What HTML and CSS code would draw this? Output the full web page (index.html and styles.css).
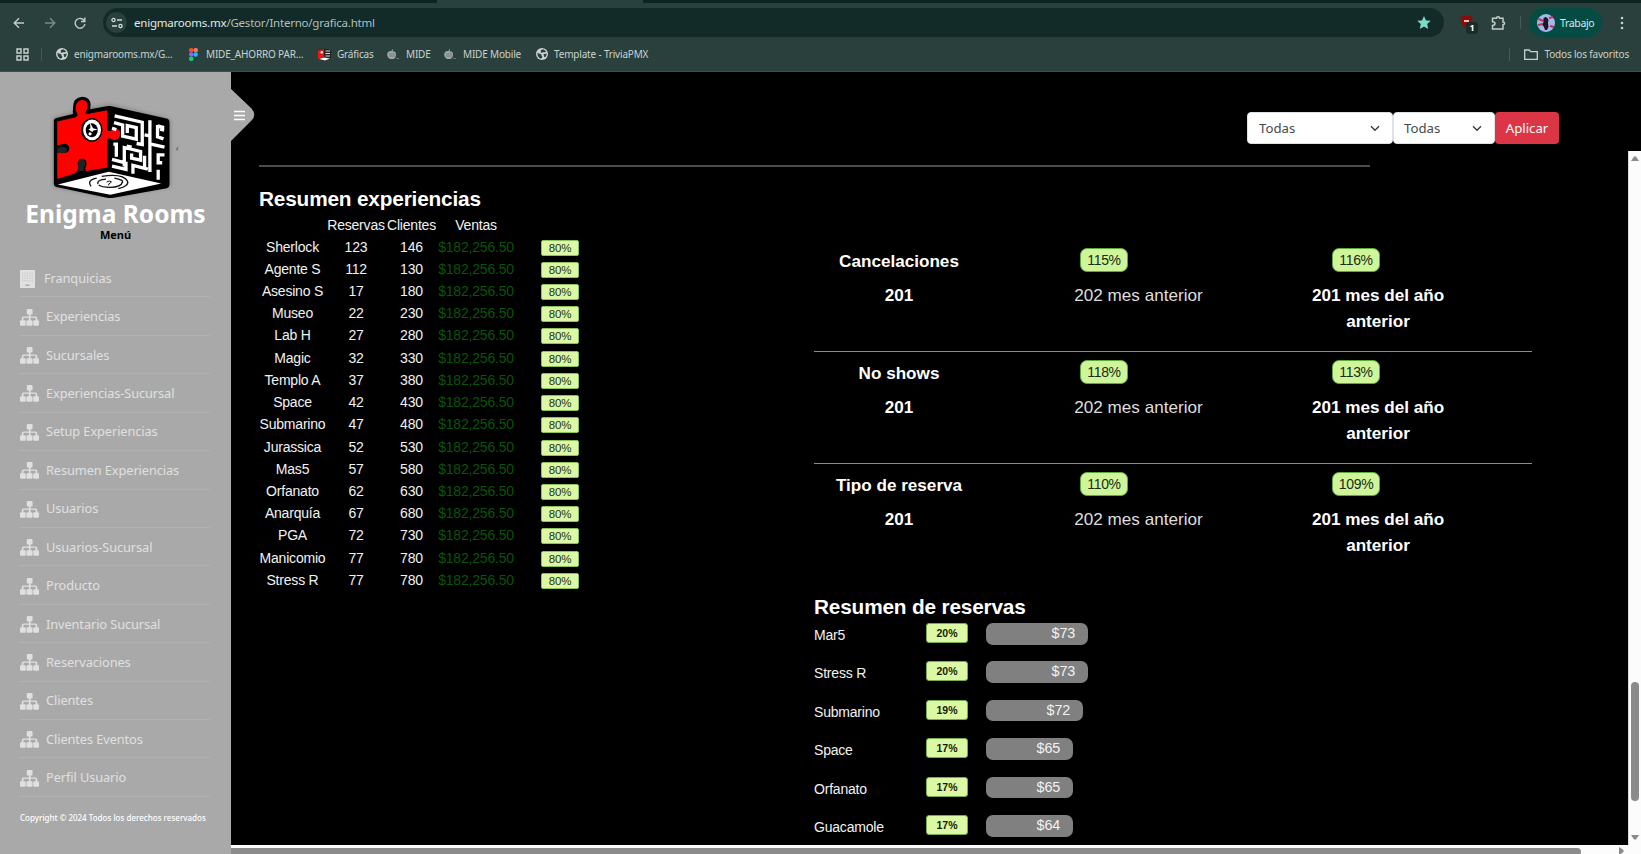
FILE: index.html
```html
<!DOCTYPE html>
<html lang="es">
<head>
<meta charset="utf-8">
<title>Enigma Rooms</title>
<link rel="stylesheet" href="styles.css">
</head>
<body>
<svg class="defs" width="0" height="0" aria-hidden="true">
  <symbol id="sitemap" viewBox="0 0 56 50"><path d="M20 3q0-3 3-3h11q3 0 3 3v10q0 3-3 3h-3v6h14q6 0 6 6v5h2q3 0 3 3v10q0 3-3 3H42q-3 0-3-3V36q0-3 3-3h4v-5q0-2-2-2H31v7h3q3 0 3 3v10q0 3-3 3H22q-3 0-3-3V36q0-3 3-3h4v-7H12q-2 0-2 2v5h4q3 0 3 3v10q0 3-3 3H3q-3 0-3-3V36q0-3 3-3h2v-5q0-6 6-6h15v-6h-3q-3 0-3-3z" fill="currentColor"/></symbol>
  <symbol id="globe" viewBox="0 0 12 12"><circle cx="6" cy="6" r="6" fill="#cdd3d2"/><path d="M1.400 5l2.400.8 1.600.4v1.200l1 1-.8 2.200C3.200 10.600 1.200 8.500 1.400 5zM5 2l2.200-.8 3 2L8.400 4.600 7 4 6.200 5 4.600 4.200zM7.400 6.200l3.400-.6-.8 2.800-1.600.8z" fill="#2a403c"/></symbol>
  <symbol id="apple" viewBox="0 0 12 11"><path d="M4.500 2Q4.500.3 6 0q.2 1.500-.7 2.300Q9 2 9 5.500T6.400 10H3.200Q0 8.500.2 5.200.6 1.800 4.500 2z" fill="#9ba7a5"/><path d="M2 5h6M2 7h6" stroke="#63736f" stroke-width=".7"/><path d="M9 9.500h3" stroke="#667773"/></symbol>
</svg>

<header class="browser">
  <div class="tabstrip"></div>
  <div class="toolbar">
    <svg class="nav-back" width="12" height="12" viewBox="0 0 12 12"><path d="M11 6H1.500M6 1.200L1.200 6 6 10.800"/></svg>
    <svg class="nav-fwd" width="12" height="12" viewBox="0 0 12 12"><path d="M1 6h9.500M6 1.200L10.800 6 6 10.800"/></svg>
    <svg class="nav-reload" width="12" height="12" viewBox="0 0 12 12"><path d="M10.500 4.200A4.900 4.900 0 1 0 10.900 7M10.800.5v4H7"/></svg>
    <div class="address">
      <span class="site-info"><svg width="12" height="12" viewBox="0 0 12 12"><circle cx="2.500" cy="3" r="1.600"/><path d="M6 3h5M1 9h5"/><circle cx="9.500" cy="9" r="1.600"/></svg></span>
      <span class="url"><b>enigmarooms.mx</b>/Gestor/Interno/grafica.html</span>
      <svg class="star" width="14" height="13" viewBox="0 0 24 23"><path d="M12 0l3.500 7.800 8.500.8-6.400 5.700 1.900 8.700L12 18.500 4.500 23l1.900-8.700L0 8.600l8.500-.8z"/></svg>
    </div>
    <span class="shield"><svg width="13" height="14" viewBox="0 0 13 14"><path d="M6.500 0Q9 1.800 12.500 1.800 12.800 10 6.500 14 .2 10 .5 1.800 4 1.800 6.500 0z" fill="#8c0c0c"/><path d="M4 6h5" stroke="#fff" stroke-width="1.500"/></svg><em>1</em></span>
    <svg class="puzzle" width="15" height="14" viewBox="0 0 15 14"><path d="M1.500 2.200h4Q5.500.8 7 .8t1.500 1.400h3.500V6q1.600 0 1.600 1.300T12 8.700v4.300H1.500V9.500Q4 9.300 4 7.500T1.500 5.700z"/></svg>
    <i class="sep"></i>
    <span class="profile"><svg width="18" height="18" viewBox="0 0 18 18"><circle cx="9" cy="9" r="9" fill="#a9b7e8"/><path d="M1.500 5l5 2M1 11l5-1M12 4l4-1M13 12l4 1" stroke="#b03a55" stroke-width="2"/><path d="M6.500 4l2-1 2 1 1 2-.5 3 .5 4-1.500 3H8l-1-3-1.500-2 1-3z" fill="#1c1428"/></svg>Trabajo</span>
    <svg class="dots" width="4" height="14" viewBox="0 0 4 14"><circle cx="2" cy="2" r="1.300"/><circle cx="2" cy="7" r="1.300"/><circle cx="2" cy="12" r="1.300"/></svg>
  </div>
  <div class="bookmarks">
    <svg class="apps" width="13" height="13" viewBox="0 0 13 13"><path d="M1 1h4v4H1zM8 1h4v4H8zM1 8h4v4H1zM8 8h4v4H8z"/></svg>
    <i class="sep"></i>
    <a class="bm bm-1"><svg width="12" height="12"><use href="#globe"/></svg><span>enigmarooms.mx/G...</span></a>
    <a class="bm bm-2"><svg width="9" height="13" viewBox="0 0 9 13"><rect width="4.500" height="4.300" rx="2" fill="#f24e1e"/><rect x="4.500" width="4.500" height="4.300" rx="2" fill="#ff7262"/><rect y="4.300" width="4.500" height="4.300" rx="2" fill="#a259ff"/><circle cx="6.700" cy="6.500" r="2.200" fill="#1abcfe"/><rect y="8.600" width="4.500" height="4.300" rx="2" fill="#0acf83"/></svg><span>MIDE_AHORRO PAR...</span></a>
    <a class="bm bm-3"><svg width="13" height="13" viewBox="0 0 13 13"><path d="M0 2l6-1.500L13 2v8l-6 3-7-2z" fill="#222"/><path d="M0 2.500L6 1v8l-6 2z" fill="#f01414"/><circle cx="3.800" cy="4.200" r="1.200" fill="#fff"/><path d="M7.500 3h4.500M7.500 5.500h4.500M7.500 8h4.500" stroke="#ddd"/><path d="M1 11l5-1.500 6 1-5 2z" fill="#fff"/></svg><span>Gráficas</span></a>
    <a class="bm bm-4"><svg width="12" height="11"><use href="#apple"/></svg><span>MIDE</span></a>
    <a class="bm bm-5"><svg width="12" height="11"><use href="#apple"/></svg><span>MIDE Mobile</span></a>
    <a class="bm bm-6"><svg width="12" height="12"><use href="#globe"/></svg><span>Template - TriviaPMX</span></a>
    <div class="all-bm"><i class="sep"></i><svg width="14" height="11" viewBox="0 0 14 11"><path d="M.7 1h4.500l1.500 1.700h6.600V10.300H.7z"/></svg><span>Todos los favoritos</span></div>
  </div>
</header>

<div class="app">
  <aside class="sidebar">
    <div class="toggle"><svg width="25" height="54" viewBox="0 0 25 54"><path d="M0 0l21.500 20.500q5.500 6.500 0 12L0 54z" fill="#a9a9a9"/><path d="M4 23.500h11M4 27.500h11M4 31.500h11" stroke="#fff" stroke-width="1.700"/></svg></div>
    <svg class="logo" width="130" height="103" viewBox="150 75 390 310">
      <defs><filter id="glow" x="-20%" y="-20%" width="140%" height="140%"><feGaussianBlur stdDeviation="8"/></filter></defs>
      <path d="M160 145l60-15 25-45 25 30 60-10 180 45v200l-180 30-170-30z" fill="#555" opacity=".55" filter="url(#glow)"/>
      <path d="M161 152q0-6 8-8l50-12q-2-8 0-14-3-36 28-38 27 2 24 30l-1 8 50-9q8-2 14 0l166 37q9 2 9 12v188q0 8-8 10l-160 28q-10 2-20 0l-152-32q-8-2-8-10z" fill="#000"/>
      <path d="M171 155l56-13q7-3 4-11-6-10-4-24 5-16 20-17 17 2 16 19-1 7-5 14-4 10 5 9l59-11v59q4 6 13 2 16-10 24 2 6 14-5 23-9 7-18 1-12-7-14 3v82l-61 11q-7-1-5-11 6-12 1-20-6-9-15-6-10 4-9 18 4 11-2 19l-8 7-52 17v-77q4-6 17-2 16 2 19-10 2-14-12-17-13 0-21 5-4 1-3-9z" fill="#f00"/>
      <path d="M171 236q8-6 18-5 13 2 12 12-4 9-15 7l-15-3zM235 305q-6-30 8-37 16 2 13 15-6 8-4 20z" fill="#222"/>
      <ellipse cx="275" cy="180" rx="32" ry="36" fill="#000"/><ellipse cx="276" cy="180" rx="27" ry="31" fill="#fff"/><ellipse cx="275" cy="181" rx="18" ry="21" fill="#000"/><path d="M270 158l9 17 14 4-13 3-3 4-12-7 6-4z" fill="#fff"/><circle cx="270" cy="192" r="5" fill="#fff"/>
      <path d="M173 344l153-38 158 35-153 34z" fill="#fff"/>
      <g fill="none" stroke="#111" stroke-width="4"><path d="M273 350q-14-19 17-25M305 320q65-10 78 15 4 14-28 22M293 343q-2-14 25-15M368 336q-4 16-38 17-25 0-34-7M343 325q30 5 24 14"/><path d="M320 337q8-6 14-1-1 4-8 7v4" stroke-width="3"/></g>
      <g fill="none" stroke="#fff" stroke-width="10" stroke-linejoin="miter"><path d="M344 138l83 19v67l-17-3M342 158l26 7v34l41 9v-35l-27-6v22M336 175l13 4M450 151v156M450 198l-16-3M450 222l44 10M473 165v36l18 6M473 168l20 5M493 181l-12-3M340 223h9v38M373 290v-57l49 12v26l-27-6v-14M395 232l-15-3M336 269l42 11v19l-42-10M399 312v-25l45 11M475 330v-30M475 277v-22h19M475 256v23h12M434 258v40"/></g>
      <path d="M535 228v15l-8-3z" fill="#777"/>
    </svg>
    <h1 class="brand">Enigma Rooms</h1>
    <div class="menu-label">Menú</div>
    <nav class="menu">
      <a class="first"><svg width="15" height="18" viewBox="0 0 15 18"><path d="M0 0h15v18H0z" fill="currentColor"/><path d="M2 3.200h11M2 5.700h11M2 8.200h11M2 10.700h11" stroke="#c4c4c4" stroke-dasharray="1.200 1.200"/><path d="M5.500 14.500h4v1.500h-4z" fill="#aaa"/></svg><span>Franquicias</span></a>
      <a><svg><use href="#sitemap"/></svg><span>Experiencias</span></a>
      <a><svg><use href="#sitemap"/></svg><span>Sucursales</span></a>
      <a><svg><use href="#sitemap"/></svg><span>Experiencias-Sucursal</span></a>
      <a><svg><use href="#sitemap"/></svg><span>Setup Experiencias</span></a>
      <a><svg><use href="#sitemap"/></svg><span>Resumen Experiencias</span></a>
      <a><svg><use href="#sitemap"/></svg><span>Usuarios</span></a>
      <a><svg><use href="#sitemap"/></svg><span>Usuarios-Sucursal</span></a>
      <a><svg><use href="#sitemap"/></svg><span>Producto</span></a>
      <a><svg><use href="#sitemap"/></svg><span>Inventario Sucursal</span></a>
      <a><svg><use href="#sitemap"/></svg><span>Reservaciones</span></a>
      <a><svg><use href="#sitemap"/></svg><span>Clientes</span></a>
      <a><svg><use href="#sitemap"/></svg><span>Clientes Eventos</span></a>
      <a><svg><use href="#sitemap"/></svg><span>Perfil Usuario</span></a>
    </nav>
    <p class="copyright">Copyright © 2024 Todos los derechos reservados</p>
  </aside>

  <main class="main">
    <div class="filters">
      <div class="select wide"><span>Todas</span><svg width="10" height="7" viewBox="0 0 10 7"><path d="M1 1.200l4 4 4-4"/></svg></div>
      <div class="select"><span>Todas</span><svg width="10" height="7" viewBox="0 0 10 7"><path d="M1 1.200l4 4 4-4"/></svg></div>
      <div class="apply">Aplicar</div>
    </div>
    <div class="scroller">
      <div class="content">
        <div class="rule"></div>
        <div class="columns">
          <section class="experiences">
            <h2>Resumen experiencias</h2>
            <div class="row head"><span></span><span>Reservas</span><span>Clientes</span><span>Ventas</span></div>
            <div class="row"><span>Sherlock</span><span>123</span><span>146</span><span class="money">$182,256.50</span><b>80%</b></div>
            <div class="row"><span>Agente S</span><span>112</span><span>130</span><span class="money">$182,256.50</span><b>80%</b></div>
            <div class="row"><span>Asesino S</span><span>17</span><span>180</span><span class="money">$182,256.50</span><b>80%</b></div>
            <div class="row"><span>Museo</span><span>22</span><span>230</span><span class="money">$182,256.50</span><b>80%</b></div>
            <div class="row"><span>Lab H</span><span>27</span><span>280</span><span class="money">$182,256.50</span><b>80%</b></div>
            <div class="row"><span>Magic</span><span>32</span><span>330</span><span class="money">$182,256.50</span><b>80%</b></div>
            <div class="row"><span>Templo A</span><span>37</span><span>380</span><span class="money">$182,256.50</span><b>80%</b></div>
            <div class="row"><span>Space</span><span>42</span><span>430</span><span class="money">$182,256.50</span><b>80%</b></div>
            <div class="row"><span>Submarino</span><span>47</span><span>480</span><span class="money">$182,256.50</span><b>80%</b></div>
            <div class="row"><span>Jurassica</span><span>52</span><span>530</span><span class="money">$182,256.50</span><b>80%</b></div>
            <div class="row"><span>Mas5</span><span>57</span><span>580</span><span class="money">$182,256.50</span><b>80%</b></div>
            <div class="row"><span>Orfanato</span><span>62</span><span>630</span><span class="money">$182,256.50</span><b>80%</b></div>
            <div class="row"><span>Anarquía</span><span>67</span><span>680</span><span class="money">$182,256.50</span><b>80%</b></div>
            <div class="row"><span>PGA</span><span>72</span><span>730</span><span class="money">$182,256.50</span><b>80%</b></div>
            <div class="row"><span>Manicomio</span><span>77</span><span>780</span><span class="money">$182,256.50</span><b>80%</b></div>
            <div class="row"><span>Stress R</span><span>77</span><span>780</span><span class="money">$182,256.50</span><b>80%</b></div>
          </section>
          <section class="right">
            <div class="stat">
              <div><strong class="name">Cancelaciones</strong><strong>201</strong></div>
              <div class="month"><i class="pill">115%</i><span>202 mes anterior</span></div>
              <div class="year"><i class="pill">116%</i><strong>201 mes del año anterior</strong></div>
            </div>
            <div class="stat">
              <div><strong class="name">No shows</strong><strong>201</strong></div>
              <div class="month"><i class="pill">118%</i><span>202 mes anterior</span></div>
              <div class="year"><i class="pill">113%</i><strong>201 mes del año anterior</strong></div>
            </div>
            <div class="stat last">
              <div><strong class="name">Tipo de reserva</strong><strong>201</strong></div>
              <div class="month"><i class="pill">110%</i><span>202 mes anterior</span></div>
              <div class="year"><i class="pill">109%</i><strong>201 mes del año anterior</strong></div>
            </div>
            <h2>Resumen de reservas</h2>
            <div class="bookings">
              <div class="booking"><span>Mar5</span><b>20%</b><i style="width:102.500px">$73</i></div>
              <div class="booking"><span>Stress R</span><b>20%</b><i style="width:102.500px">$73</i></div>
              <div class="booking"><span>Submarino</span><b>19%</b><i style="width:97.500px">$72</i></div>
              <div class="booking"><span>Space</span><b>17%</b><i style="width:87.500px">$65</i></div>
              <div class="booking"><span>Orfanato</span><b>17%</b><i style="width:87.500px">$65</i></div>
              <div class="booking"><span>Guacamole</span><b>17%</b><i style="width:87.500px">$64</i></div>
            </div>
          </section>
        </div>
      </div>
      <div class="vbar"><svg width="8" height="5" viewBox="0 0 8 5"><path d="M0 5l3-4.500h2L8 5z"/></svg><i></i><svg width="8" height="5" viewBox="0 0 8 5"><path d="M0 0l3 4.500h2L8 0z"/></svg></div>
    </div>
    <div class="hbar"><i></i><svg width="5" height="8" viewBox="0 0 5 8"><path d="M0 0l4.500 3v2L0 8z"/></svg></div>
  </main>
</div>
</body>
</html>
```
FILE: styles.css
```css
* { box-sizing: border-box; }
body { margin: 0; width: 1641px; height: 854px; overflow: hidden; background: #000; font-family: "Noto Sans", "Open Sans", sans-serif; }
svg { display: block; flex: none; }
.defs { position: absolute; }
i, em { font-style: normal; }

/* browser chrome */
.browser { height: 72px; background: #2a403c; border-bottom: 1px solid #3b4f4b; color: #c9d1cf; }
.tabstrip { height: 3px; background: linear-gradient(90deg, #0b2420 437px, #2a403c 437px, #2a403c 643px, #0b2420 643px); }
.toolbar { height: 39px; display: flex; align-items: center; padding-left: 13px; }
.toolbar > svg { fill: none; stroke: #c3cbc9; stroke-width: 1.400; }
.toolbar .nav-fwd { margin-left: 19px; stroke: #7b8b87; }
.toolbar .nav-reload { margin-left: 18px; }
.address { margin-left: 17px; width: 1341px; height: 29px; border-radius: 15px; background: #122b28; display: flex; align-items: center; padding: 0 13px 0 3px; }
.site-info { width: 21px; height: 21px; border-radius: 50%; background: #2a403c; display: flex; align-items: center; justify-content: center; margin-right: 7px; }
.site-info svg { fill: none; stroke: #d3dad8; stroke-width: 1.300; }
.url { font-size: 11.500px; letter-spacing: -.22px; color: #b3bfbc; white-space: nowrap; }
.url b { font-weight: 400; color: #e3e9e7; }
.star { margin-left: auto; fill: #7fdccb; }
.shield { position: relative; margin-left: 16px; width: 20px; height: 16px; }
.shield em { position: absolute; left: 6px; top: 7px; width: 12px; height: 12px; border-radius: 3px; background: #202b29; color: #fff; font-size: 9px; font-weight: 700; line-height: 12px; text-align: center; }
.toolbar .puzzle { margin-left: 11px; stroke-width: 1.500; }
.sep { width: 1px; height: 13px; background: #465b56; }
.toolbar .sep { margin-left: 14px; }
.profile { margin-left: 8px; width: 73px; height: 29px; border-radius: 15px; background: #044c43; display: flex; align-items: center; padding-left: 8px; gap: 5px; font-size: 10.500px; color: #d7ebe6; letter-spacing: -.35px; }
.toolbar .dots { margin-left: 18px; fill: #c9d1cf; stroke: none; }
.bookmarks { height: 24px; display: flex; align-items: center; padding: 0 12px 0 16px; font-size: 10px; letter-spacing: -.18px; white-space: nowrap; }
.apps { fill: none; stroke: #c9d1cf; stroke-width: 1.400; }
.bookmarks > .sep { margin-left: 12px; }
.bm { display: flex; align-items: center; gap: 6px; flex: none; }
.bm-1 { margin-left: 14px; width: 133px; }
.bm-2 { width: 129px; gap: 8px; }
.bm-3 { width: 69px; }
.bm-4 { width: 57px; gap: 7px; }
.bm-5 { width: 92px; gap: 7px; }
.all-bm { margin-left: auto; display: flex; align-items: center; }
.all-bm svg { margin: 0 7px 0 14px; fill: none; stroke: #c9d1cf; stroke-width: 1.300; }

/* layout */
.app { display: flex; height: 782px; }
.sidebar { position: relative; width: 231px; background: #a9a9a9; display: flex; flex-direction: column; z-index: 2; }
.toggle { position: absolute; left: 230px; top: 16px; }
.logo { margin: 23px 0 0 50px; }
.brand { margin: 0; height: 29px; line-height: 32px; font-size: 24.500px; color: #fff; text-align: center; white-space: nowrap; }
.menu-label { height: 14px; line-height: 14px; margin-top: 1px; font-size: 11px; font-weight: 700; color: #000; text-align: center; }
.menu { margin: 17px 21px 0 20px; }
.menu a { height: 38.430px; display: flex; align-items: center; gap: 7px; border-bottom: 1px solid #b2b2b2; color: #e0e0e0; font-size: 12.800px; white-space: nowrap; letter-spacing: -.1px; }
.menu a svg { width: 19px; height: 17px; margin-top: 2px; }
.menu a.first { gap: 9px; }
.menu a.first svg { width: 15px; height: 18px; }
.copyright { margin: 14px 0 0 20px; font-size: 8px; line-height: 14px; font-weight: 500; color: #fff; white-space: nowrap; }

.main { width: 1410px; display: flex; flex-direction: column; background: #000; }
.filters { height: 79px; padding: 40px 82px 0 0; display: flex; justify-content: flex-end; font-size: 13.200px; }
.select { width: 102px; height: 32px; background: #fff; border: 1px solid #dee2e6; border-radius: 4px; color: #45494d; display: flex; align-items: center; justify-content: space-between; padding: 0 12px 0 10px; }
.select.wide { width: 146px; padding-left: 11px; }
.select svg { fill: none; stroke: #343a40; stroke-width: 1.400; }
.apply { width: 64px; height: 32px; line-height: 32px; background: #dc3545; color: #fff; border-radius: 4px; text-align: center; font-size: 13.200px; }
.scroller { height: 694px; display: flex; }
.content { width: 1397px; padding: 14px 0 0 28px; overflow: hidden; font-family: "Liberation Sans", Arial, sans-serif; color: #fff; }
.rule { width: 1111px; height: 2px; background: #4b4b4b; }
.columns { display: flex; }
h2 { margin: 0; font-size: 20.800px; letter-spacing: -.18px; line-height: 25px; white-space: nowrap; }

.experiences { width: 555px; padding-top: 19px; }
.row { display: grid; grid-template-columns: 67px 60px 51px 78px 64px; height: 22.230px; align-items: center; text-align: center; font-size: 14px; letter-spacing: -.2px; line-height: 18px; color: #f2f2f2; white-space: nowrap; }
.row.head { height: 25px; padding-top: 3px; }
.row span { display: flex; justify-content: center; padding-bottom: 1px; }
.row.head span { padding-bottom: 0; }
.row .money { color: #0a540a; }
.row b { width: 38px; height: 16px; margin: 1px 0 0 26px; background: #dbf8a4; border: 1px solid #8cbf5e; border-radius: 2px; color: #273313; font-weight: 400; font-size: 11.500px; line-height: 15px; }

.right { padding-top: 73px; width: 718px; }
.stat { height: 112px; padding-top: 8px; display: grid; grid-template-columns: 170px 309px 170px; font-size: 17.120px; line-height: 25.700px; text-align: center; border-bottom: 1px solid #8c8c8c; }
.stat.last { border-bottom-color: transparent; }
.stat strong, .stat span { display: block; }
.stat .name { padding-top: 1px; margin-bottom: 8.500px; }
.stat span { color: #dedede; }
.pill { display: block; width: 48px; height: 24px; margin: 0 0 11px; border: 1px solid #5fa83b; border-radius: 7px; background: #cff59a; color: #202a12; font-size: 14px; letter-spacing: -.3px; line-height: 22px; }
.month .pill { margin-left: 96px; }
.year .pill { margin-left: 39px; }
.right h2 { margin-top: 18px; }
.bookings { padding-top: 4px; }
.booking { height: 38.430px; display: flex; align-items: flex-start; font-size: 14px; letter-spacing: -.2px; color: #f2f2f2; }
.booking span { width: 112px; line-height: 16px; padding-top: 4px; }
.booking b { width: 42px; height: 20px; margin: 0 17.500px 0 0; background: #dbf8a4; border: 1px solid #79ab50; border-radius: 3px; color: #141c08; font-size: 10.500px; letter-spacing: 0; line-height: 18px; text-align: center; }
.booking i { height: 21.500px; border-radius: 7px; background: #808080; text-align: right; padding-right: 13px; line-height: 21px; font-size: 14.400px; }

/* scrollbars */
.vbar { width: 13px; background: #fcfcfc; display: flex; flex-direction: column; align-items: center; padding-top: 5px; border-left: 1px solid #d8d8d8; }
.vbar svg, .hbar svg { fill: #8b8b8b; }
.vbar i { width: 8px; height: 119px; margin: 521px 0 34px; border-radius: 4px; background: #8b8b8b; }
.hbar { height: 9px; background: #fcfcfc; display: flex; overflow: hidden; align-items: flex-start; padding-top: 2px; }
.hbar i { width: 1350px; height: 8px; margin-top: 1px; background: #8b8b8b; border-radius: 0 4px 4px 0; flex: none; }
.hbar svg { margin-left: 38px; }
```
